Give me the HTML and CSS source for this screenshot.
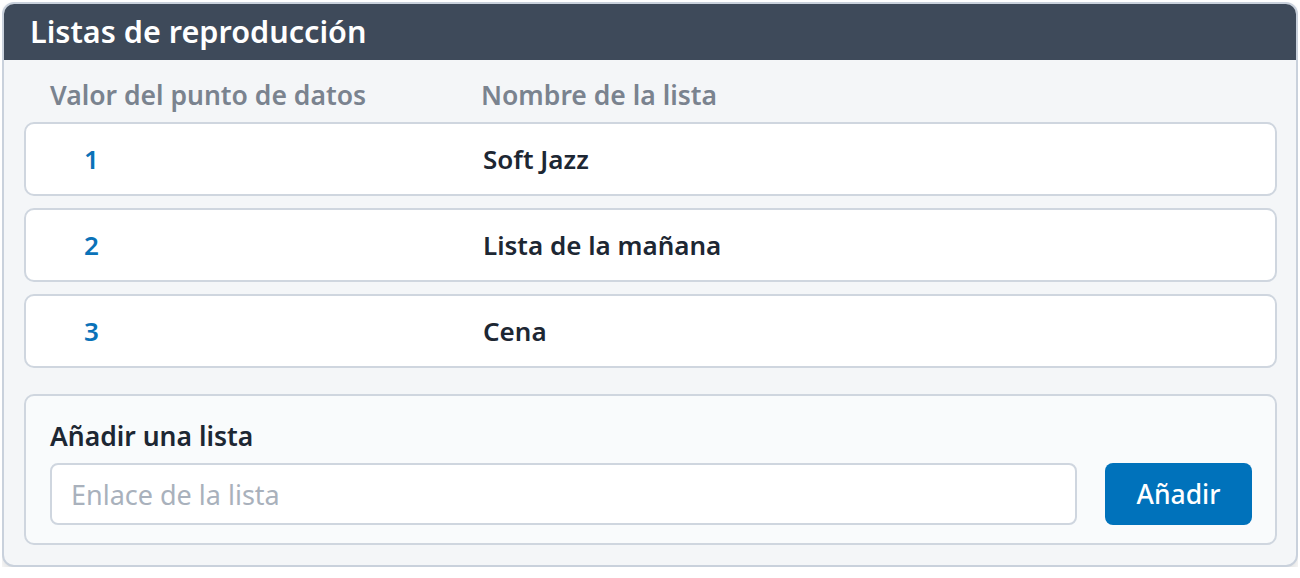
FILE: index.html
```html
<!DOCTYPE html>
<html lang="es">

<head>
  <meta charset="utf-8">
  <title>Listas de reproducción</title>
  <link rel="stylesheet" href="styles.css">
</head>

<body>
  <div class="card">
    <div class="card-head">Listas de reproducción</div>
    <div class="card-body">
      <div class="cols">
        <span>Valor del punto de datos</span>
        <span>Nombre de la lista</span>
      </div>
      <div class="rows">
        <div class="row"><span class="num">1</span><span class="name">Soft Jazz</span></div>
        <div class="row"><span class="num">2</span><span class="name">Lista de la mañana</span></div>
        <div class="row"><span class="num">3</span><span class="name">Cena</span></div>
      </div>
      <div class="add">
        <div class="add-title">Añadir una lista</div>
        <div class="add-line">
          <input type="text" class="add-input" placeholder="Enlace de la lista">
          <button type="button" class="add-btn">Añadir</button>
        </div>
      </div>
    </div>
  </div>
</body>

</html>
```

FILE: styles.css
```css
* {
  box-sizing: border-box;
}

body {
  margin: 2px;
  background-color: #ffffff;
  font-family: "Noto Sans", "Open Sans", sans-serif;
}

.card {
  border: 2px solid #c9d1dc;
  border-radius: 12px;
  overflow: hidden;
  background-color: #f4f6f8;
  box-shadow: 0 6px 10px rgba(0, 0, 0, 0.12);
}

.card-head {
  height: 56px;
  background-color: #3e4a5a;
  color: #ffffff;
  font-size: 30.6px;
  font-weight: 600;
  line-height: 54px;
  padding-left: 26px;
}

.card-body {
  padding: 17px 19px 20px 20px;
}

.cols {
  display: grid;
  grid-template-columns: 431px 1fr;
  padding-left: 26px;
  color: #7a838f;
  font-size: 26.5px;
  font-weight: 600;
  line-height: 36px;
  margin-bottom: 9px;
}

.rows {
  display: flex;
  flex-direction: column;
  gap: 12px;
}

.row {
  display: grid;
  grid-template-columns: 431px 1fr;
  align-items: center;
  height: 74px;
  padding-left: 26px;
  background-color: #ffffff;
  border: 2px solid #cfd6df;
  border-radius: 10px;
  font-size: 26px;
  font-weight: 600;
}

.num {
  padding-left: 32px;
  color: #0a72b8;
}

.name {
  color: #1d2733;
}

.add {
  margin-top: 26px;
  padding: 20px 23px 18px 24px;
  background-color: #f9fbfc;
  border: 2px solid #cfd6df;
  border-radius: 10px;
}

.add-title {
  color: #1d2733;
  font-size: 26.5px;
  font-weight: 600;
  line-height: 40px;
  margin-bottom: 7px;
}

.add-line {
  display: flex;
  gap: 28px;
}

.add-input {
  flex: 1;
  height: 62px;
  border: 2px solid #cfd6df;
  border-radius: 8px;
  padding: 0 19px;
  font-family: inherit;
  font-size: 27px;
  color: #1d2733;
  background-color: #ffffff;
}

.add-input::placeholder {
  color: #a9b1bc;
}

.add-btn {
  width: 147px;
  height: 62px;
  border: none;
  border-radius: 8px;
  background-color: #0072bb;
  color: #ffffff;
  font-family: inherit;
  font-size: 26.5px;
  font-weight: 500;
}
```
